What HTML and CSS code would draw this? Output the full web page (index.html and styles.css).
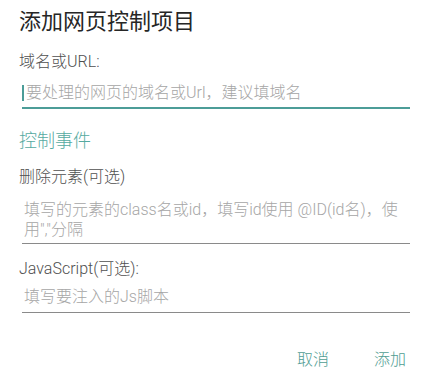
FILE: index.html
```html
<!DOCTYPE html>
<html lang="zh-CN">
<head>
<meta charset="utf-8">
<title>添加网页控制项目</title>
<link rel="stylesheet" href="styles.css">
</head>
<body>
<div class="dialog">
  <h1 class="title">添加网页控制项目</h1>
  <div class="label label-url">域名或URL:</div>
  <div class="field field-active">
    <span class="cursor"></span><span class="placeholder">要处理的网页的域名或Url，建议填域名</span>
  </div>
  <div class="section">控制事件</div>
  <div class="label label-del">删除元素(可选)</div>
  <div class="field field-multi">
    <span class="placeholder">填写的元素的class名或id，填写id使用 @ID(id名)，使<br>用","分隔</span>
  </div>
  <div class="label label-js">JavaScript(可选):</div>
  <div class="field field-js">
    <span class="placeholder">填写要注入的Js脚本</span>
  </div>
  <div class="actions">
    <span class="btn">取消</span>
    <span class="btn">添加</span>
  </div>
</div>
</body>
</html>
```

FILE: styles.css
```css
html, body {
  margin: 0;
  padding: 0;
  background: #ffffff;
}

body {
  font-family: Roboto, "Noto Sans CJK SC", sans-serif;
  width: 425px;
  height: 388px;
  overflow: hidden;
}

.dialog {
  padding: 7px 15px 0 19px;
}

.title {
  margin: 0;
  font-size: 22px;
  line-height: 30px;
  font-weight: 400;
  color: #262626;
}

.label {
  font-size: 16px;
  line-height: 20px;
  font-weight: 300;
  color: #4f4f4f;
}

.label-url {
  margin-top: 15px;
}

.label-del {
  margin-top: 14px;
}

.label-js {
  margin-top: 15px;
}

.field {
  margin-left: 3px;
  padding-left: 2px;
  display: flex;
  align-items: center;
  font-size: 16px;
  line-height: 20px;
  font-weight: 300;
  border-bottom: 1px solid #8a8a8a;
}

.field-active {
  margin-top: 11px;
  padding-left: 0;
  padding-bottom: 4px;
  border-bottom: 2px solid #4c9d98;
}

.field-multi {
  margin-top: 13px;
  padding-bottom: 3px;
}

.field-js {
  margin-top: 8px;
  padding-bottom: 5px;
}

.cursor {
  display: inline-block;
  width: 2px;
  height: 16px;
  background: #4c9d98;
  margin-right: 2px;
}

.placeholder {
  color: #a6a6a6;
}

.section {
  margin-top: 20px;
  font-size: 18px;
  line-height: 24px;
  font-weight: 300;
  color: #55aaa1;
}

.actions {
  margin-top: 37px;
  padding-right: 4px;
  display: flex;
  justify-content: flex-end;
  gap: 45px;
}

.btn {
  font-size: 16px;
  line-height: 20px;
  font-weight: 300;
  color: #4f9d92;
}
```
